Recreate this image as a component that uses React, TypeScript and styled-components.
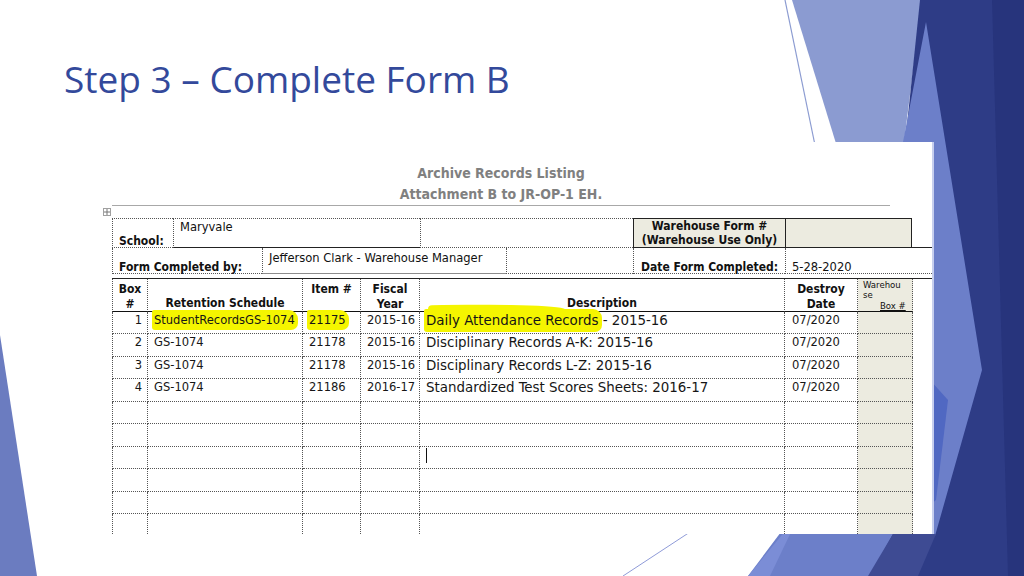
import React from "react";
import styled, { createGlobalStyle, css } from "styled-components";

const GlobalStyle = createGlobalStyle`
  html, body { margin: 0; padding: 0; background: #ffffff; }
  body { width: 1024px; height: 576px; overflow: hidden; }
`;

const Slide = styled.div`
  position: relative;
  width: 1024px;
  height: 576px;
  overflow: hidden;
  background: #ffffff;
`;

const Backdrop = styled.svg`
  position: absolute;
  left: 0;
  top: 0;
  width: 1024px;
  height: 576px;
  z-index: 0;
`;

const Content = styled.div`
  position: relative;
  z-index: 1;
  display: flex;
  flex-direction: column;
  align-items: flex-start;
`;

const Title = styled.h1`
  margin: 55px 0 0 64px;
  font-family: "Open Sans", sans-serif;
  font-weight: 400;
  font-size: 37px;
  line-height: 47px;
  color: #33499b;
  white-space: nowrap;
`;

const Shot = styled.section`
  position: relative;
  box-sizing: border-box;
  margin: 40px 0 0 95px;
  width: 837px;
  height: 392px;
  padding-left: 17px;
  background: #ffffff;
  overflow: hidden;
  box-shadow: 2px 0 0 #c7cfee;
  font-family: "DejaVu Sans Condensed", "DejaVu Sans", sans-serif;
  color: #111111;
`;

const DocHeader = styled.header`
  width: 778px;
  padding-top: 21px;
  text-align: center;
  border-bottom: 1px solid #a8a8a8;
  font-weight: bold;
  font-size: 14px;
  line-height: 21px;
  color: #808080;
`;

const MoveHandle = styled.span`
  position: absolute;
  left: 8px;
  top: 66px;
  width: 8px;
  height: 8px;
  box-sizing: border-box;
  border: 1px solid #a0a0a0;
  display: flex;
  align-items: center;
  justify-content: center;
`;

const TopSection = styled.div`
  margin-top: 12px;
  display: flex;
  flex-direction: column;
  font-size: 12px;
  line-height: 15px;
`;

const FieldRow = styled.div<{ $h: number }>`
  display: flex;
  height: ${(p) => p.$h}px;
`;

type Line = "dotted" | "solid" | "gray" | "none";
const lineCss = (l: Line) =>
  l === "dotted"
    ? "1px dotted #555"
    : l === "solid"
    ? "1px solid #222"
    : l === "gray"
    ? "1px solid #8c8c8c"
    : "none";

const Field = styled.div<{
  $w?: number;
  $left?: Line;
  $top?: Line;
  $right?: Line;
  $bottom?: Line;
  $beige?: boolean;
  $bold?: boolean;
  $align?: "top" | "bottom";
  $center?: boolean;
  $pl?: number;
  $pt?: number;
}>`
  box-sizing: border-box;
  ${(p) => (p.$w ? css`width: ${p.$w}px; flex: none;` : css`flex: 1;`)}
  border-left: ${(p) => lineCss(p.$left || "none")};
  border-top: ${(p) => lineCss(p.$top || "none")};
  border-right: ${(p) => lineCss(p.$right || "none")};
  border-bottom: ${(p) => lineCss(p.$bottom || "none")};
  background: ${(p) => (p.$beige ? "#ecebe0" : "transparent")};
  font-weight: ${(p) => (p.$bold ? "bold" : "normal")};
  font-size: ${(p) => (p.$bold ? 12 : 12.8)}px;
  line-height: ${(p) => (p.$align === "bottom" ? 12 : 15)}px;
  display: flex;
  flex-direction: column;
  justify-content: ${(p) => (p.$align === "bottom" ? "flex-end" : "flex-start")};
  text-align: ${(p) => (p.$center ? "center" : "left")};
  padding-left: ${(p) => p.$pl ?? 6}px;
  padding-top: ${(p) => p.$pt ?? 0}px;
  white-space: nowrap;
`;

const StackedLabel = styled.div`
  line-height: 14px;
`;

const Rule = styled.div`
  margin-top: 4px;
  border-top: 1px solid #222;
`;

const cols = [36, 155, 58, 59, 365, 73, 55];

const Listing = styled.div`
  display: grid;
  grid-template-columns: ${cols.map((c) => c + "px").join(" ")};
  grid-template-rows: 33px repeat(10, 22.45px);
  width: ${cols.reduce((a, b) => a + b, 0)}px;
  font-size: 12px;
  line-height: 15px;
`;

const HeadCell = styled.div<{
  $first?: boolean;
  $beige?: boolean;
  $align?: "top" | "bottom";
}>`
  box-sizing: border-box;
  border-right: 1px dotted #555;
  border-left: ${(p) => (p.$first ? "1px dotted #555" : "none")};
  border-bottom: 1px solid #111;
  background: ${(p) => (p.$beige ? "#ecebe0" : "transparent")};
  font-weight: bold;
  text-align: center;
  display: flex;
  flex-direction: column;
  justify-content: ${(p) => (p.$align === "bottom" ? "flex-end" : "flex-start")};
  padding-top: ${(p) => (p.$align === "bottom" ? 0 : 3)}px;
  white-space: nowrap;
  overflow: hidden;
`;

const WarehouseHead = styled.div`
  font-weight: normal;
  font-size: 9.5px;
  line-height: 10px;
  text-align: left;
  padding: 0 0 0 5px;
  margin-top: -2px;
`;

const BoxLabel = styled.div`
  padding-left: 17px;
  margin-top: 1px;
  text-decoration: underline;
`;

const DataCell = styled.div<{
  $first?: boolean;
  $beige?: boolean;
  $right?: boolean;
  $big?: boolean;
  $pl?: number;
}>`
  box-sizing: border-box;
  border-right: 1px dotted #555;
  border-left: ${(p) => (p.$first ? "1px dotted #555" : "none")};
  border-bottom: 1px dotted #555;
  background: ${(p) => (p.$beige ? "#ecebe0" : "transparent")};
  text-align: ${(p) => (p.$right ? "right" : "left")};
  padding: 0 ${(p) => (p.$right ? 5 : 0)}px 0 ${(p) => p.$pl ?? 6}px;
  font-size: ${(p) => (p.$big ? 14.9 : 12.8)}px;
  line-height: ${(p) => (p.$big ? 17 : 15)}px;
  white-space: nowrap;
  overflow: visible;
  color: #161616;
`;

const Mark = styled.span<{ $sweep?: boolean }>`
  position: relative;
  z-index: 0;
  background: #f5f500;
  border-radius: 2px 9px 7px 3px;
  padding: 2px 3px 3px 2px;
  margin: 0 -3px 0 -2px;
  ${(p) =>
    p.$sweep &&
    css`
      &::before {
        content: "";
        position: absolute;
        left: 4px;
        right: 36px;
        top: -5px;
        height: 7px;
        background: #f5f500;
        border-radius: 4px 90% 0 0 / 4px 100% 0 0;
        transform: rotate(-1deg);
        z-index: -1;
      }
    `}
`;

const Caret = styled.span`
  display: inline-block;
  width: 1px;
  height: 15px;
  background: #111;
  margin-top: 1px;
`;

type Row = {
  box: string;
  sched: React.ReactNode;
  item: React.ReactNode;
  year: string;
  desc: React.ReactNode;
  date: string;
};

const rows: Row[] = [
  {
    box: "1",
    sched: <Mark>StudentRecordsGS-1074</Mark>,
    item: <Mark>21175</Mark>,
    year: "2015-16",
    desc: (
      <>
        <Mark $sweep>Daily Attendance Records</Mark> - 2015-16
      </>
    ),
    date: "07/2020",
  },
  {
    box: "2",
    sched: "GS-1074",
    item: "21178",
    year: "2015-16",
    desc: "Disciplinary Records A-K: 2015-16",
    date: "07/2020",
  },
  {
    box: "3",
    sched: "GS-1074",
    item: "21178",
    year: "2015-16",
    desc: "Disciplinary Records L-Z: 2015-16",
    date: "07/2020",
  },
  {
    box: "4",
    sched: "GS-1074",
    item: "21186",
    year: "2016-17",
    desc: "Standardized Test Scores Sheets: 2016-17",
    date: "07/2020",
  },
  ...Array.from({ length: 6 }, (_, i) => ({
    box: "",
    sched: "",
    item: "",
    year: "",
    desc: i === 2 ? <Caret /> : "",
    date: "",
  })),
];

export default function App() {
  return (
    <>
      <GlobalStyle />
      <Slide>
        <Backdrop viewBox="0 0 1024 576" aria-hidden="true">
          <polygon points="0,335 37,576 0,576" fill="#6b7cc0" />
          <line x1="623" y1="576" x2="722" y2="511" stroke="#8f9bd8" strokeWidth="1" />
          <polygon points="792,0 922,0 903,150 838,150" fill="#8b9bd1" />
          <line x1="785" y1="0" x2="816" y2="150" stroke="#8b9bd1" strokeWidth="1.2" />
          <polygon points="920,0 1024,0 1024,576 860,576" fill="#2e3c86" />
          <polygon points="992,0 1024,0 1024,576 1008,576" fill="#27347c" />
          <polygon
            points="926,22 982,370 935,536 893,534 870,576 748,576 790,520 903,142"
            fill="#6c7fc9"
          />
          <polygon points="930,380 948,400 936,500 930,505" fill="#5068c2" />
          <polygon points="748,576 786,530 792,530 770,576" fill="#7b8dd6" />
          <polygon points="893,534 936,534 918,576 868,576" fill="#3e4b93" />
        </Backdrop>
        <Content>
          <Title>Step 3 – Complete Form B</Title>
          <Shot>
            <DocHeader>
              Archive Records Listing
              <br />
              Attachment B to JR-OP-1 EH.
            </DocHeader>
            <MoveHandle>
              <svg width="6" height="6" viewBox="0 0 6 6">
                <path d="M3 0v6M0 3h6" stroke="#777" strokeWidth="1" />
              </svg>
            </MoveHandle>
            <TopSection>
              <FieldRow $h={30}>
                <Field $w={61} $left="dotted" $top="dotted" $bottom="dotted" $bold $align="bottom">
                  School:
                </Field>
                <Field $w={247} $left="dotted" $top="dotted" $bottom="solid">
                  Maryvale
                </Field>
                <Field $w={213} $left="dotted" $top="dotted" $bottom="dotted" />
                <Field
                  $w={152}
                  $left="solid"
                  $top="solid"
                  $bottom="solid"
                  $beige
                  $bold
                  $center
                  $pl={0}
                >
                  <StackedLabel>
                    Warehouse Form #
                    <br />
                    (Warehouse Use Only)
                  </StackedLabel>
                </Field>
                <Field $w={127} $left="solid" $top="solid" $right="solid" $bottom="solid" $beige />
                <Field $bottom="solid" />
              </FieldRow>
              <FieldRow $h={26}>
                <Field $w={150} $left="dotted" $bottom="dotted" $bold $align="bottom">
                  Form Completed by:
                </Field>
                <Field $w={244} $left="dotted" $bottom="gray" $pt={2}>
                  Jefferson Clark - Warehouse Manager
                </Field>
                <Field $w={127} $left="dotted" $bottom="dotted" />
                <Field $w={152} $left="dotted" $bottom="dotted" $bold $align="bottom" $pl={7}>
                  Date Form Completed:
                </Field>
                <Field $left="dotted" $bottom="dotted" $align="bottom" $pl={6}>
                  5-28-2020
                </Field>
              </FieldRow>
            </TopSection>
            <Rule />
            <Listing>
              <HeadCell $first>
                Box
                <br />#
              </HeadCell>
              <HeadCell $align="bottom">Retention Schedule</HeadCell>
              <HeadCell>Item #</HeadCell>
              <HeadCell>
                Fiscal
                <br />
                Year
              </HeadCell>
              <HeadCell $align="bottom">Description</HeadCell>
              <HeadCell>
                Destroy
                <br />
                Date
              </HeadCell>
              <HeadCell $beige>
                <WarehouseHead>
                  Warehou
                  <br />
                  se
                  <BoxLabel>Box #</BoxLabel>
                </WarehouseHead>
              </HeadCell>
              {rows.map((r, i) => (
                <React.Fragment key={i}>
                  <DataCell $first $right>
                    {r.box}
                  </DataCell>
                  <DataCell>{r.sched}</DataCell>
                  <DataCell>{r.item}</DataCell>
                  <DataCell>{r.year}</DataCell>
                  <DataCell $big>{r.desc}</DataCell>
                  <DataCell $pl={7}>{r.date}</DataCell>
                  <DataCell $beige />
                </React.Fragment>
              ))}
            </Listing>
          </Shot>
        </Content>
      </Slide>
    </>
  );
}
